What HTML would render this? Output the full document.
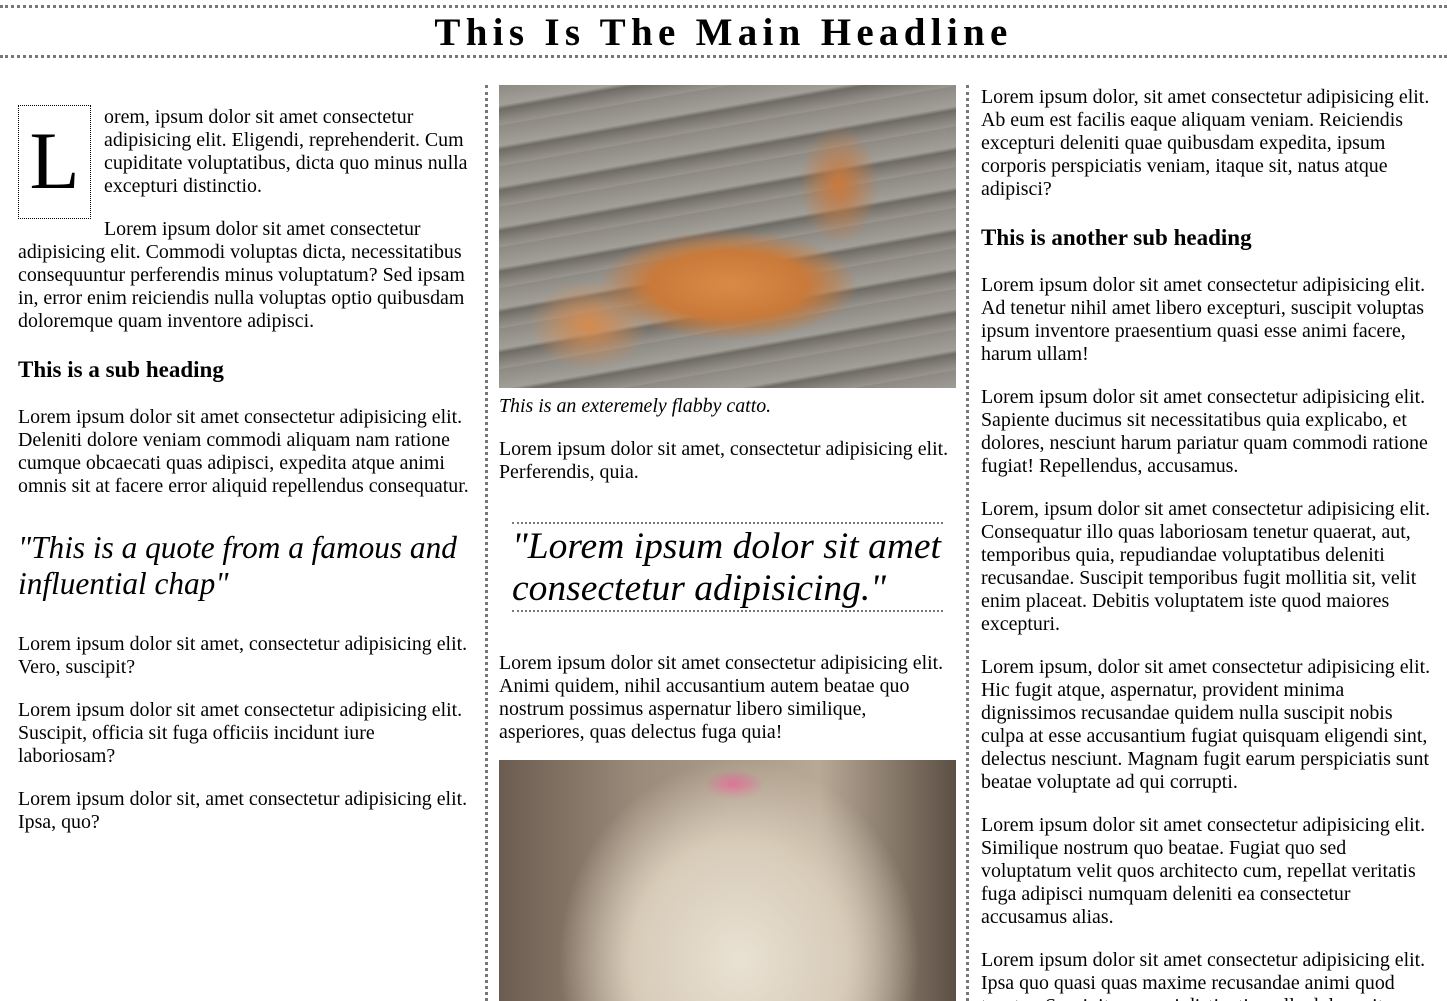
<!DOCTYPE html>
<html style="overflow:hidden;height:1001px"><head><meta charset="utf-8"><style>
*{margin:0;padding:0;box-sizing:border-box}
body{width:1447px;height:1001px;overflow:hidden;background:#fff;font-family:"Liberation Serif",serif;color:#000;font-size:19.9px;line-height:23px;position:relative}
.hd{position:absolute;left:0;top:5px;width:1447px;height:53px;border-top:3px dotted #777;border-bottom:3px dotted #777;text-align:center;font-weight:bold;font-size:39px;letter-spacing:5.3px;line-height:50px}
.col{position:absolute}
.c1{left:18px;top:106px;width:456px}
.c2{left:499px;top:85px;width:457px}
.c3{left:981px;top:86px;width:456px}
.v{position:absolute;top:85px;bottom:0;border-left:3px dotted #777}
p{margin-bottom:20px}
.dc{float:left;width:73px;height:114px;border:1px dotted #000;font-size:82px;line-height:110px;text-align:center;margin-right:13px;margin-top:-1px}
h3{font-size:23px;line-height:24px;font-weight:bold}
.q1{font-style:italic;font-size:31.3px;line-height:36px}
.q2{font-style:italic;font-size:37.5px;line-height:42px;margin:0 13px;border-top:2px dotted #777;border-bottom:2px dotted #777;padding:2px 0 0}
.img1{width:457px;height:303px;background:
radial-gradient(ellipse 130px 55px at 230px 200px,#d88a45 0,#c97a3a 60%,rgba(200,120,60,0) 100%),
radial-gradient(ellipse 60px 45px at 90px 240px,#d58b4e 0,rgba(200,120,60,0) 100%),
radial-gradient(ellipse 40px 60px at 340px 100px,#c9793c 0,rgba(200,120,60,0) 100%),
repeating-linear-gradient(170deg,#8d8a84 0,#a29f98 20px,#6f6c66 24px,#9a968f 40px);}
.img2{position:absolute;left:499px;top:760px;width:457px;height:241px;background:
radial-gradient(ellipse 180px 200px at 240px 200px,#e9e1d3 0,#d7cbb8 60%,rgba(200,190,170,0) 100%),
radial-gradient(ellipse 30px 15px at 235px 25px,#e0508a 0,rgba(224,80,138,0) 100%),
linear-gradient(90deg,#6b5c50,#9a8a7a 30%,#b8a996 70%,#5c4f44)}
</style></head><body>
<div class="hd">This Is The Main Headline</div>
<div class="v" style="left:485px"></div>
<div class="v" style="left:966px"></div>
<div class="col c1">
<div class="dc">L</div>
<p>orem, ipsum dolor sit amet consectetur adipisicing elit. Eligendi, reprehenderit. Cum cupiditate voluptatibus, dicta quo minus nulla excepturi distinctio.</p>
<p>Lorem ipsum dolor sit amet consectetur adipisicing elit. Commodi voluptas dicta, necessitatibus consequuntur perferendis minus voluptatum? Sed ipsam in, error enim reiciendis nulla voluptas optio quibusdam doloremque quam inventore adipisci.</p>
<h3 style="margin-top:25px;margin-bottom:24px">This is a sub heading</h3>
<p>Lorem ipsum dolor sit amet consectetur adipisicing elit. Deleniti dolore veniam commodi aliquam nam ratione cumque obcaecati quas adipisci, expedita atque animi omnis sit at facere error aliquid repellendus consequatur.</p>
<div class="q1" style="margin-top:32px;margin-bottom:31px">"This is a quote from a famous and influential chap"</div>
<p>Lorem ipsum dolor sit amet, consectetur adipisicing elit. Vero, suscipit?</p>
<p>Lorem ipsum dolor sit amet consectetur adipisicing elit. Suscipit, officia sit fuga officiis incidunt iure laboriosam?</p>
<p>Lorem ipsum dolor sit, amet consectetur adipisicing elit. Ipsa, quo?</p>
</div>
<div class="col c2">
<div class="img1"></div>
<p style="font-style:italic;margin-top:7px">This is an exteremely flabby catto.</p>
<p>Lorem ipsum dolor sit amet, consectetur adipisicing elit. Perferendis, quia.</p>
<div class="q2" style="margin-top:38px;margin-bottom:40px">"Lorem ipsum dolor sit amet consectetur adipisicing."</div>
<p>Lorem ipsum dolor sit amet consectetur adipisicing elit. Animi quidem, nihil accusantium autem beatae quo nostrum possimus aspernatur libero similique, asperiores, quas delectus fuga quia!</p>
</div>
<div class="img2"></div>
<div class="col c3">
<p>Lorem ipsum dolor, sit amet consectetur adipisicing elit. Ab eum est facilis eaque aliquam veniam. Reiciendis excepturi deleniti quae quibusdam expedita, ipsum corporis perspiciatis veniam, itaque sit, natus atque adipisci?</p>
<h3 style="margin-top:25px;margin-bottom:24px">This is another sub heading</h3>
<p>Lorem ipsum dolor sit amet consectetur adipisicing elit. Ad tenetur nihil amet libero excepturi, suscipit voluptas ipsum inventore praesentium quasi esse animi facere, harum ullam!</p>
<p>Lorem ipsum dolor sit amet consectetur adipisicing elit. Sapiente ducimus sit necessitatibus quia explicabo, et dolores, nesciunt harum pariatur quam commodi ratione fugiat! Repellendus, accusamus.</p>
<p>Lorem, ipsum dolor sit amet consectetur adipisicing elit. Consequatur illo quas laboriosam tenetur quaerat, aut, temporibus quia, repudiandae voluptatibus deleniti recusandae. Suscipit temporibus fugit mollitia sit, velit enim placeat. Debitis voluptatem iste quod maiores excepturi.</p>
<p>Lorem ipsum, dolor sit amet consectetur adipisicing elit. Hic fugit atque, aspernatur, provident minima dignissimos recusandae quidem nulla suscipit nobis culpa at esse accusantium fugiat quisquam eligendi sint, delectus nesciunt. Magnam fugit earum perspiciatis sunt beatae voluptate ad qui corrupti.</p>
<p>Lorem ipsum dolor sit amet consectetur adipisicing elit. Similique nostrum quo beatae. Fugiat quo sed voluptatum velit quos architecto cum, repellat veritatis fuga adipisci numquam deleniti ea consectetur accusamus alias.</p>
<p>Lorem ipsum dolor sit amet consectetur adipisicing elit. Ipsa quo quasi quas maxime recusandae animi quod tenetur. Suscipit ex quasi distinctio nulla dolore sit.</p>
</div>
</body></html>
